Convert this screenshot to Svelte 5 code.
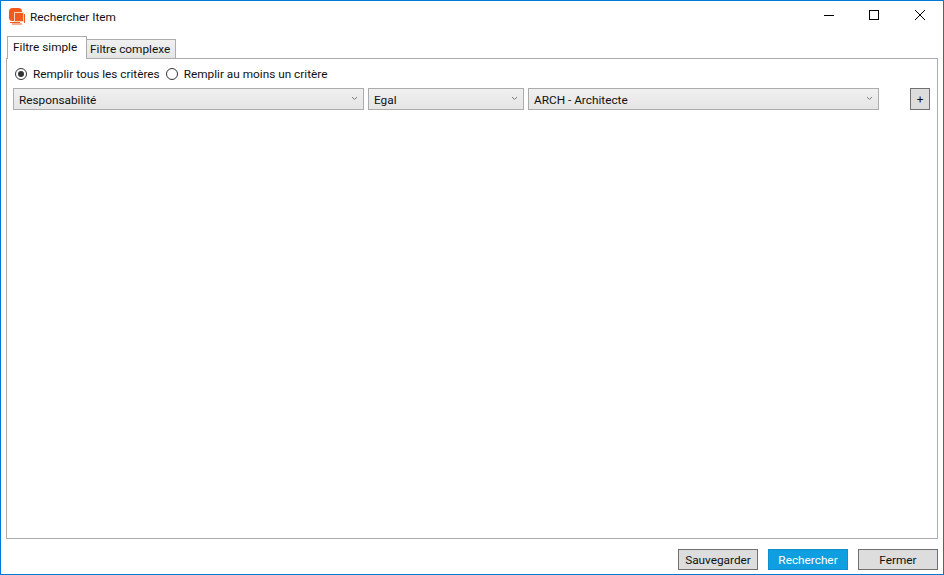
<script>
    const selects = [
        { label: "Responsabilité", cls: "wide" },
        { label: "Egal", cls: "narrow" },
        { label: "ARCH - Architecte", cls: "wide" },
    ];
</script>

<div class="window">
    <header class="titlebar">
        <svg class="logo" width="17" height="17" viewBox="0 0 17 17">
            <rect x="0" y="0" width="13" height="13" rx="3.500" fill="#ef5a1f" />
            <rect x="5.500" y="4.500" width="9" height="9" fill="#ef5a1f" stroke="#fbd3bf" stroke-width="1" />
            <path d="M1 14.500h10M3 16h10M15.500 6v9" fill="none" stroke="#ef5a1f" stroke-width="1" />
        </svg>
        <span class="title">Rechercher Item</span>
        <div class="controls">
            <svg width="12" height="12" viewBox="0 0 12 12"><path d="M2 6.500h10" stroke="#000" /></svg>
            <svg width="12" height="12" viewBox="0 0 12 12"><rect x="1.500" y="1.500" width="9" height="9" fill="none" stroke="#000" /></svg>
            <svg width="12" height="12" viewBox="0 0 12 12"><path d="M1 1l10 10M11 1L1 11" stroke="#000" /></svg>
        </div>
    </header>

    <div class="tabs">
        <div class="tab active">Filtre simple</div>
        <div class="tab">Filtre complexe</div>
    </div>

    <main class="panel">
        <div class="radios">
            <span class="radio checked"></span>
            <span class="radio-label">Remplir tous les critères</span>
            <span class="radio"></span>
            <span class="radio-label">Remplir au moins un critère</span>
        </div>
        <div class="filter">
            {#each selects as s}
                <div class="select {s.cls}">
                    <span>{s.label}</span>
                    <svg width="5" height="3" viewBox="0 0 5 3"><path d="M0 0l2.500 2.500L5 0" fill="none" stroke="#7a7a7a" /></svg>
                </div>
            {/each}
            <button class="add">+</button>
        </div>
    </main>

    <footer class="actions">
        <button>Sauvegarder</button>
        <button class="primary">Rechercher</button>
        <button>Fermer</button>
    </footer>
</div>

<style>
    :global(body) {
        margin: 0;
        background: #fff;
    }

    .window {
        width: 944px;
        height: 575px;
        box-sizing: border-box;
        border: 1px solid #0078d7;
        background: #fff;
        font-family: Roboto, "Noto Sans", sans-serif;
        font-size: 11.8px;
        color: #111;
        display: flex;
        flex-direction: column;
    }

    .titlebar {
        height: 30px;
        flex: none;
        display: flex;
        align-items: center;
        padding-left: 8px;
    }

    .logo {
        margin-right: 4px;
    }

    .title {
        flex: 1;
        padding-top: 1px;
    }

    .controls {
        display: flex;
        gap: 34px;
        padding-right: 17px;
        margin-top: -2px;
    }

    .controls svg {
        display: block;
    }

    .tabs {
        height: 28px;
        flex: none;
        display: flex;
        align-items: flex-end;
        padding: 0 0 0 6px;
        margin-bottom: -1px;
        position: relative;
        z-index: 1;
    }

    .tab {
        height: 20px;
        box-sizing: border-box;
        border: 1px solid #acacac;
        border-left: none;
        background: linear-gradient(#f0f0f0, #e5e5e5);
        padding: 0 3px;
        line-height: 19px;
        width: 89px;
        white-space: nowrap;
    }

    .tab.active {
        height: 23px;
        width: 80px;
        border-left: 1px solid #acacac;
        border-bottom: none;
        background: #fff;
        padding: 0 5px;
        line-height: 21px;
    }

    .panel {
        flex: none;
        height: 481px;
        box-sizing: border-box;
        margin: 0 5px;
        border: 1px solid #acacac;
        padding: 0 6px;
    }

    .radios {
        height: 29px;
        display: flex;
        align-items: center;
        padding-left: 2px;
    }

    .radio {
        width: 12px;
        height: 12px;
        box-sizing: border-box;
        border: 1px solid #333;
        border-radius: 50%;
        background: #fff;
        position: relative;
        margin-right: 6px;
    }

    .radio.checked::after {
        content: "";
        position: absolute;
        inset: 2px;
        border-radius: 50%;
        background: #333;
    }

    .radio-label {
        margin-right: 6px;
    }

    .filter {
        display: flex;
        gap: 4px;
    }

    .select {
        height: 22px;
        box-sizing: border-box;
        border: 1px solid #acacac;
        background: linear-gradient(#f0f0f0, #e5e5e5);
        display: flex;
        align-items: center;
        justify-content: space-between;
        padding: 1px 6px 0 5px;
    }

    .select svg {
        margin-top: -3px;
    }

    .wide {
        width: 351px;
    }

    .narrow {
        width: 156px;
    }

    button {
        font: inherit;
        color: inherit;
        border: 1px solid #707070;
        background: #ddd;
        padding: 0;
        box-sizing: border-box;
    }

    .add {
        width: 20px;
        height: 22px;
        margin-left: 27px;
    }

    .actions {
        flex: 1;
        display: flex;
        justify-content: flex-end;
        align-items: flex-start;
        gap: 10px;
        padding: 10px 5px 0 0;
    }

    .actions button {
        width: 80px;
        height: 21px;
    }

    .actions .primary {
        background: #0f9fe0;
        border-color: #0f8fd0;
        color: #fff;
    }
</style>
